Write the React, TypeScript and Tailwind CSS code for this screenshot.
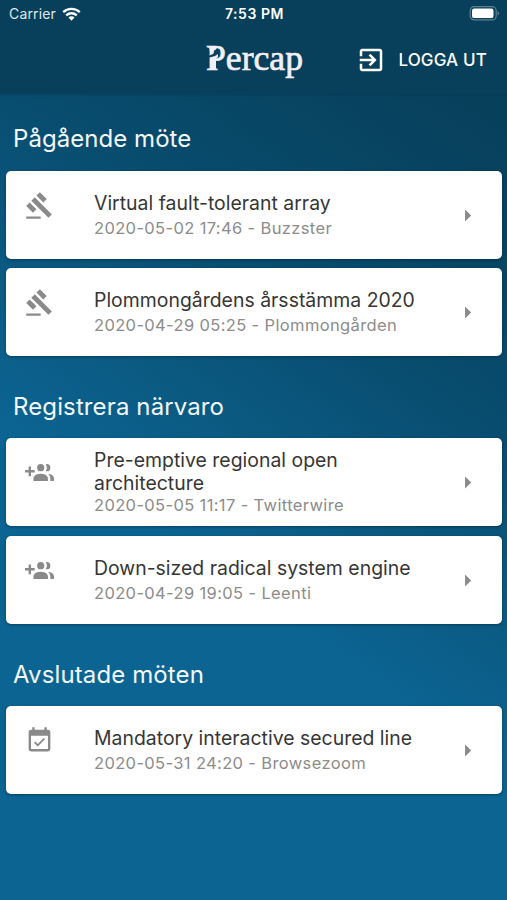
import React from "react";

type IconName = "gavel" | "groupAdd" | "calendarCheck";

const icons: Record<IconName, string> = {
  gavel:
    "M1 21h12v2H1zM5.245 8.07l2.83-2.827 14.14 14.142-2.828 2.828zM12.317 1l5.657 5.656-2.83 2.83-5.654-5.66zM3.825 9.485l5.657 5.657-2.828 2.828-5.657-5.657z",
  groupAdd:
    "M19 17v2H7v-2s0-4 6-4 6 4 6 4M16 8a3 3 0 1 0-3 3 3 3 0 0 0 3-3M19.2 13.06A5.6 5.6 0 0 1 21 17v2h3v-2s0-3.45-4.8-3.94M18 5a2.91 2.91 0 0 0-.89.14 5 5 0 0 1 0 5.72A2.91 2.91 0 0 0 18 11a3 3 0 0 0 0-6M8 10H5V7H3v3H0v2h3v3h2v-3h3z",
  calendarCheck:
    "M19 19H5V8h14m0-5h-1V1h-2v2H8V1H6v2H5a2 2 0 0 0-2 2v14a2 2 0 0 0 2 2h14a2 2 0 0 0 2-2V5a2 2 0 0 0-2-2m-2.470 8.060L15.470 10l-4.880 4.880-2.120-2.120-1.060 1.060L10.590 17z",
};

interface Meeting {
  title: string;
  meta: string;
}

interface Section {
  heading: string;
  icon: IconName;
  meetings: Meeting[];
}

const sections: Section[] = [
  {
    heading: "Pågående möte",
    icon: "gavel",
    meetings: [
      { title: "Virtual fault-tolerant array", meta: "2020-05-02 17:46 - Buzzster" },
      { title: "Plommongårdens årsstämma 2020", meta: "2020-04-29 05:25 - Plommongården" },
    ],
  },
  {
    heading: "Registrera närvaro",
    icon: "groupAdd",
    meetings: [
      { title: "Pre-emptive regional open architecture", meta: "2020-05-05 11:17 - Twitterwire" },
      { title: "Down-sized radical system engine", meta: "2020-04-29 19:05 - Leenti" },
    ],
  },
  {
    heading: "Avslutade möten",
    icon: "calendarCheck",
    meetings: [{ title: "Mandatory interactive secured line", meta: "2020-05-31 24:20 - Browsezoom" }],
  },
];

function StatusBar() {
  return (
    <div className="grid h-[27px] grid-cols-3 items-center pl-[9px] pr-[7px] text-[14px] text-white">
      <div className="flex items-center gap-1.5">
        <span className="tracking-[0.15px] text-[#dfe8ec]">Carrier</span>
        <svg className="h-[14px] w-[19px]" viewBox="0 0 19 14" fill="none" stroke="#fff" strokeWidth="2.3">
          <path d="M1.200 5.200a12 12 0 0 1 16.600 0" />
          <path d="M4.200 8.400a7.600 7.600 0 0 1 10.600 0" />
          <path d="M9.500 13.700 6.500 10.600a4.200 4.200 0 0 1 6 0z" fill="#fff" stroke="none" />
        </svg>
      </div>
      <span className="text-center font-semibold tracking-[0.55px]">7:53 PM</span>
      <div className="flex justify-end">
        <svg className="h-[15px] w-[31px]" viewBox="0 0 31 15" fill="none">
          <rect x="1.200" y="0.700" width="26" height="13.200" rx="4" stroke="#5d8093" strokeWidth="1.200" />
          <rect x="3" y="2.500" width="21.500" height="9.600" rx="2.200" fill="#fff" />
          <path d="M28.600 5v4.600a2.500 2.500 0 0 0 0-4.600" fill="#5d8093" />
        </svg>
      </div>
    </div>
  );
}

function Logo() {
  return (
    <svg className="h-[44px] w-[100px] overflow-visible" viewBox="0 0 100 44">
      <text
        x="2"
        y="31.5"
        textLength="97"
        lengthAdjust="spacingAndGlyphs"
        fill="#f1eff5"
        stroke="#f1eff5"
        strokeWidth="0.700"
        className="font-['Liberation_Serif',serif] text-[36px]"
      >
        Percap
      </text>
      {/* Stencil break and flared stem of the initial */}
      <path d="M5 8h9l-2 3.500-3 1.500-1.500 3L6 14z" fill="#f1eff5" />
      <path d="M4.500 18 9 16l1.500-2 3 1-2 3-6 1.500z" fill="#08405b" />
      <path d="M6 20l5-2 3-2v3l-2 2v10H6.500z" fill="#f1eff5" />
    </svg>
  );
}

function Header() {
  return (
    <header className="h-[94px] bg-[#08405b] shadow-[0_1px_2px_rgba(0,30,50,0.2)]">
      <StatusBar />
      <div className="grid h-[65px] grid-cols-[1fr_100px_1fr] items-center text-white">
        <div />
        <Logo />
        <button className="flex items-center justify-end gap-[12px] pr-[20px]">
          <svg className="size-[30px]" viewBox="0 0 24 24" fill="currentColor">
            <path d="M10.090 15.590L11.500 17l5-5-5-5-1.410 1.410L12.670 11H3v2h9.670l-2.580 2.590zM19 3H5c-1.110 0-2 .9-2 2v4h2V5h14v14H5v-4H3v4c0 1.100.890 2 2 2h14c1.100 0 2-.9 2-2V5c0-1.100-.9-2-2-2z" />
          </svg>
          <span className="pt-[2px] text-[17px] font-medium tracking-[0.15px]">LOGGA UT</span>
        </button>
      </div>
    </header>
  );
}

function MeetingCard({ meeting, icon }: { meeting: Meeting; icon: IconName }) {
  return (
    <li className="flex h-[88px] rounded-[5px] bg-white pl-[19px] pr-5 shadow-[0_1px_3px_rgba(0,25,45,0.45)]">
      <svg className="mt-5 size-[29px] shrink-0" viewBox="0 0 24 24" fill="#8a8a8a" fillRule="evenodd">
        <path d={icons[icon]} />
      </svg>
      <div className="ml-10 flex w-[330px] flex-col justify-center pt-px">
        <h3 className="min-h-[25px] text-[19.4px] leading-[22.5px] tracking-[0.02px] text-[#363636]">{meeting.title}</h3>
        <p className="text-[16.5px] leading-[22px] tracking-[0.36px] text-[#8c8c8c]">{meeting.meta}</p>
      </div>
      <svg className="ml-auto size-[29px] shrink-0 self-center" viewBox="0 0 24 24" fill="#8a8a8a">
        <path d="M10 17l5-5-5-5z" />
      </svg>
    </li>
  );
}

export default function App() {
  return (
    <div className="min-h-[900px] w-[507px] bg-[linear-gradient(215deg,#07405b_10%,#084c6e_34%,#0b5b84_51%,#0b6492_62%)] font-['Inter',sans-serif]">
      <Header />
      <main className="pl-[6px] pr-[5px]">
        {sections.map((section) => (
          <section key={section.heading} className="group">
            <h2 className="flex h-[82px] items-end pb-[13px] pl-[7px] text-[24px] tracking-[0.12px] text-[#f3f8fa] group-first:h-[77px] group-first:pb-[14px] group-first:tracking-[0.05px]">
              {section.heading}
            </h2>
            <ul className="flex flex-col gap-[10px] group-first:gap-[9px]">
              {section.meetings.map((meeting) => (
                <MeetingCard key={meeting.title} meeting={meeting} icon={section.icon} />
              ))}
            </ul>
          </section>
        ))}
      </main>
    </div>
  );
}
